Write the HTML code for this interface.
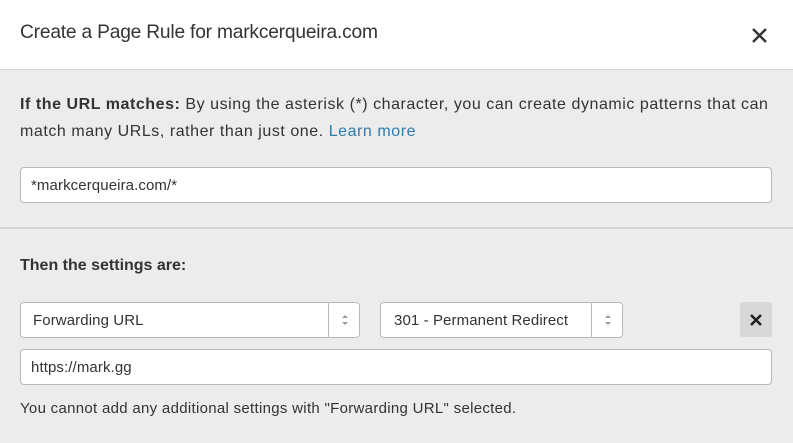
<!DOCTYPE html>
<html><head><style>
*{box-sizing:border-box;margin:0;padding:0}
body{width:793px;height:443px;background:#ebeceb;font-family:"Liberation Sans",sans-serif;color:#333;position:relative;overflow:hidden}
.hdr{position:absolute;left:0;top:0;width:793px;height:70px;background:#fff;border-bottom:1px solid #d5d5d5}
.title{position:absolute;left:20px;top:22px;font-size:19.2px;color:#333;letter-spacing:-0.2px}
.close{position:absolute;left:751px;top:27px}
.p{position:absolute;left:20px;font-size:16px;letter-spacing:.55px;line-height:27px;color:#333}
.box{position:absolute;background:#fff;border:1px solid #b8b8b8;border-radius:4px;font-size:15px;letter-spacing:.1px;color:#333}
.sep{position:absolute;left:0;top:227px;width:793px;height:2px;background:#d5d5d5}
.arr{position:absolute;top:0;height:100%;width:32px;border-left:1px solid #b8b8b8}
</style></head><body>
<div class="hdr"><div class="title">Create a Page Rule for markcerqueira.com</div>
<svg class="close" width="17" height="17" viewBox="0 0 17 17"><path d="M2 2L15 15M15 2L2 15" stroke="#333" stroke-width="2.4"/></svg></div>
<div class="p" style="top:91px;width:765px"><b>If the URL matches:</b> By using the asterisk (*) character, you can create dynamic patterns that can match many URLs, rather than just one. <span style="color:#2c7cb0">Learn more</span></div>
<div class="box" style="left:20px;top:167px;width:752px;height:36px;padding:9px 10px">*markcerqueira.com/*</div>
<div class="sep"></div>
<div class="p" style="top:252px;font-weight:bold;letter-spacing:0">Then the settings are:</div>
<div class="box" style="left:20px;top:302px;width:340px;height:36px;padding:9px 12px;font-size:15px;letter-spacing:.1px">Forwarding URL<div class="arr" style="left:307px"><svg width="32" height="34" viewBox="0 0 32 34"><path d="M13 15l3-3 3 3zM13 19l3 3 3-3z" fill="#999"/></svg></div></div>
<div class="box" style="left:380px;top:302px;width:243px;height:36px;padding:9px 13px;font-size:15px;letter-spacing:.1px">301 - Permanent Redirect<div class="arr" style="left:210px"><svg width="32" height="34" viewBox="0 0 32 34"><path d="M13 15l3-3 3 3zM13 19l3 3 3-3z" fill="#999"/></svg></div></div>
<div style="position:absolute;left:740px;top:302px;width:32px;height:35px;background:#d7d8d7;border-radius:3px"><svg width="32" height="35" viewBox="0 0 32 35"><path d="M11 13L21 23M21 13L11 23" stroke="#222" stroke-width="2.6"/></svg></div>
<div class="box" style="left:20px;top:349px;width:752px;height:36px;padding:9px 10px">https://mark.gg</div>
<div class="p" style="top:395px;font-size:15px;letter-spacing:.3px">You cannot add any additional settings with "Forwarding URL" selected.</div>
</body></html>
